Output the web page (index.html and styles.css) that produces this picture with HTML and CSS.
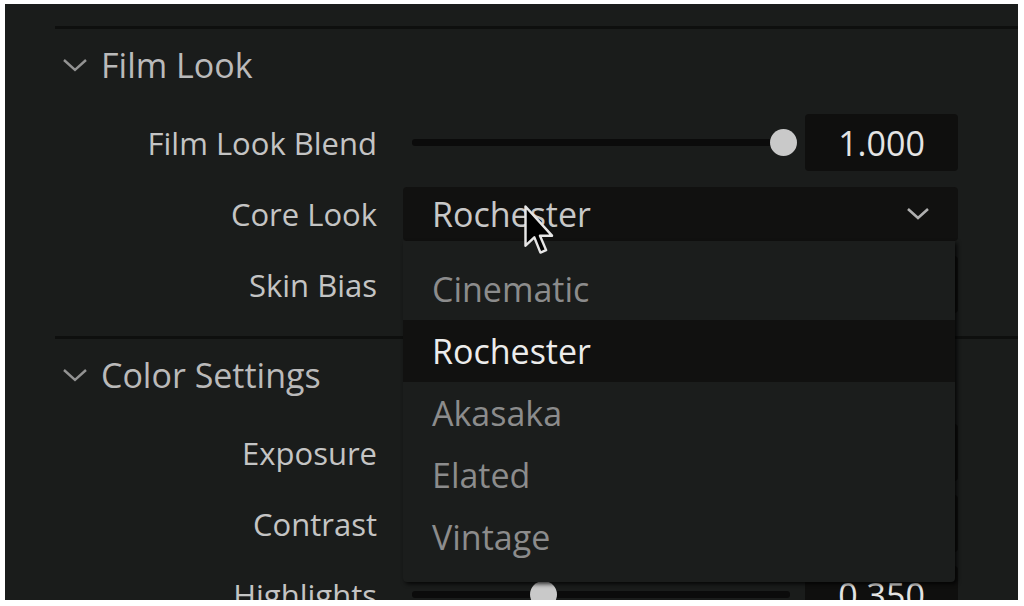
FILE: index.html
```html
<!DOCTYPE html>
<html lang="en">
<head>
    <meta charset="UTF-8">
    <title>Film Look</title>
    <link rel="stylesheet" href="styles.css">
</head>
<body>
<div class="frame">
    <div class="panel">
        <section class="group">
            <div class="group-head">
                <svg class="chev" viewBox="0 0 26 14"><polyline points="2,2 13,12 24,2"/></svg>
                <span>Film Look</span>
            </div>
            <div class="rows">
                <div class="row">
                    <div class="label">Film Look Blend</div>
                    <div class="slider">
                        <div class="track"><span class="thumb" style="left: 371px"></span></div>
                        <div class="value">1.000</div>
                    </div>
                </div>
                <div class="row">
                    <div class="label">Core Look</div>
                    <div class="select-wrap">
                        <div class="select">
                            <span>Rochester</span>
                            <svg class="select-chev" viewBox="0 0 24 14"><polyline points="2,2 12,11 22,2"/></svg>
                        </div>
                        <ul class="options">
                            <li>Cinematic</li>
                            <li class="active">Rochester</li>
                            <li>Akasaka</li>
                            <li>Elated</li>
                            <li>Vintage</li>
                        </ul>
                    </div>
                </div>
                <div class="row">
                    <div class="label">Skin Bias</div>
                    <div class="slider">
                        <div class="track"><span class="thumb" style="left: 190px"></span></div>
                        <div class="value">0.500</div>
                    </div>
                </div>
            </div>
        </section>
        <section class="group">
            <div class="group-head">
                <svg class="chev" viewBox="0 0 26 14"><polyline points="2,2 13,12 24,2"/></svg>
                <span>Color Settings</span>
            </div>
            <div class="rows">
                <div class="row">
                    <div class="label">Exposure</div>
                    <div class="slider">
                        <div class="track"><span class="thumb" style="left: 190px"></span></div>
                        <div class="value">0.000</div>
                    </div>
                </div>
                <div class="row">
                    <div class="label">Contrast</div>
                    <div class="slider">
                        <div class="track"><span class="thumb" style="left: 190px"></span></div>
                        <div class="value">1.000</div>
                    </div>
                </div>
                <div class="row">
                    <div class="label">Highlights</div>
                    <div class="slider">
                        <div class="track"><span class="thumb" style="left: 131px"></span></div>
                        <div class="value">0.350</div>
                    </div>
                </div>
            </div>
        </section>

        <svg class="cursor" viewBox="0 0 13 22"><path d="M1 1 L1 17 L4.6 13.6 L7.1 19.8 L9.4 18.8 L6.9 12.9 L11.8 12.9 Z"/></svg>
    </div>
</div>
</body>
</html>
```

FILE: styles.css
```css
body {
    margin: 0;
    background-color: #fff;
    font-family: "Open Sans", "Noto Sans", sans-serif;
}
.frame {
    padding: 4px 6px 6px 5px;
}
.panel {
    position: relative;
    height: 596px;
    overflow: hidden;
    background-color: #1a1c1b;
    padding-top: 22px;
    box-sizing: border-box;
}
.group {
    margin-left: 50px;
    border-top: 3px solid #0e0f0e;
    padding-bottom: 16px;
}
.group-head {
    height: 72px;
    display: flex;
    align-items: center;
    gap: 13px;
    padding-left: 7px;
    color: #bababa;
    font-size: 34px;
    font-weight: 500;
}
.chev {
    width: 26px;
    height: 14px;
    fill: none;
    stroke: #939393;
    stroke-width: 2.4;
}
.rows {
    padding-top: 6px;
}
.row {
    height: 71px;
    display: grid;
    grid-template-columns: 322px 555px;
    column-gap: 26px;
    align-items: center;
}
.label {
    text-align: right;
    color: #c4c4c4;
    font-size: 31px;
    font-weight: 500;
}

/* slider + value box */
.slider {
    display: flex;
    align-items: center;
}
.track {
    position: relative;
    width: 378px;
    height: 7px;
    margin-left: 9px;
    margin-right: 15px;
    background-color: #0b0b0b;
    border-radius: 3px;
}
.thumb {
    position: absolute;
    top: 50%;
    width: 27px;
    height: 27px;
    margin: -13.5px 0 0 -13.5px;
    border-radius: 50%;
    background-color: #c9c9c9;
}
.value {
    width: 153px;
    height: 57px;
    display: flex;
    align-items: center;
    justify-content: center;
    background-color: #0f0f0e;
    border-radius: 4px;
    color: #e4e4e4;
    font-size: 34px;
    font-weight: 500;
}

/* dropdown */
.select-wrap {
    position: relative;
}
.select {
    height: 54px;
    display: flex;
    align-items: center;
    justify-content: space-between;
    padding: 0 28px 0 29px;
    background-color: #111110;
    border-radius: 4px;
    color: #c8c8c8;
    font-size: 34px;
    font-weight: 500;
}
.select-chev {
    width: 24px;
    height: 14px;
    fill: none;
    stroke: #b0b0b0;
    stroke-width: 2.6;
}
.options {
    position: absolute;
    z-index: 2;
    top: 54px;
    left: 0;
    width: 552px;
    height: 341px;
    box-sizing: border-box;
    margin: 0;
    padding: 17px 0 0;
    list-style: none;
    background-color: #1b1d1c;
    border-radius: 0 0 4px 4px;
    box-shadow: 2px 2px 4px rgba(0, 0, 0, 0.8);
}
.options li {
    height: 62px;
    display: flex;
    align-items: center;
    padding-left: 29px;
    color: #8c8c8c;
    font-size: 34px;
    font-weight: 500;
}
.options li.active {
    background-color: #111110;
    color: #ececec;
}

.cursor {
    position: absolute;
    z-index: 3;
    left: 518px;
    top: 200px;
    width: 32px;
    height: 54px;
    fill: #000;
    stroke: #e6e6e6;
    stroke-width: 1;
    stroke-linejoin: round;
}
```
